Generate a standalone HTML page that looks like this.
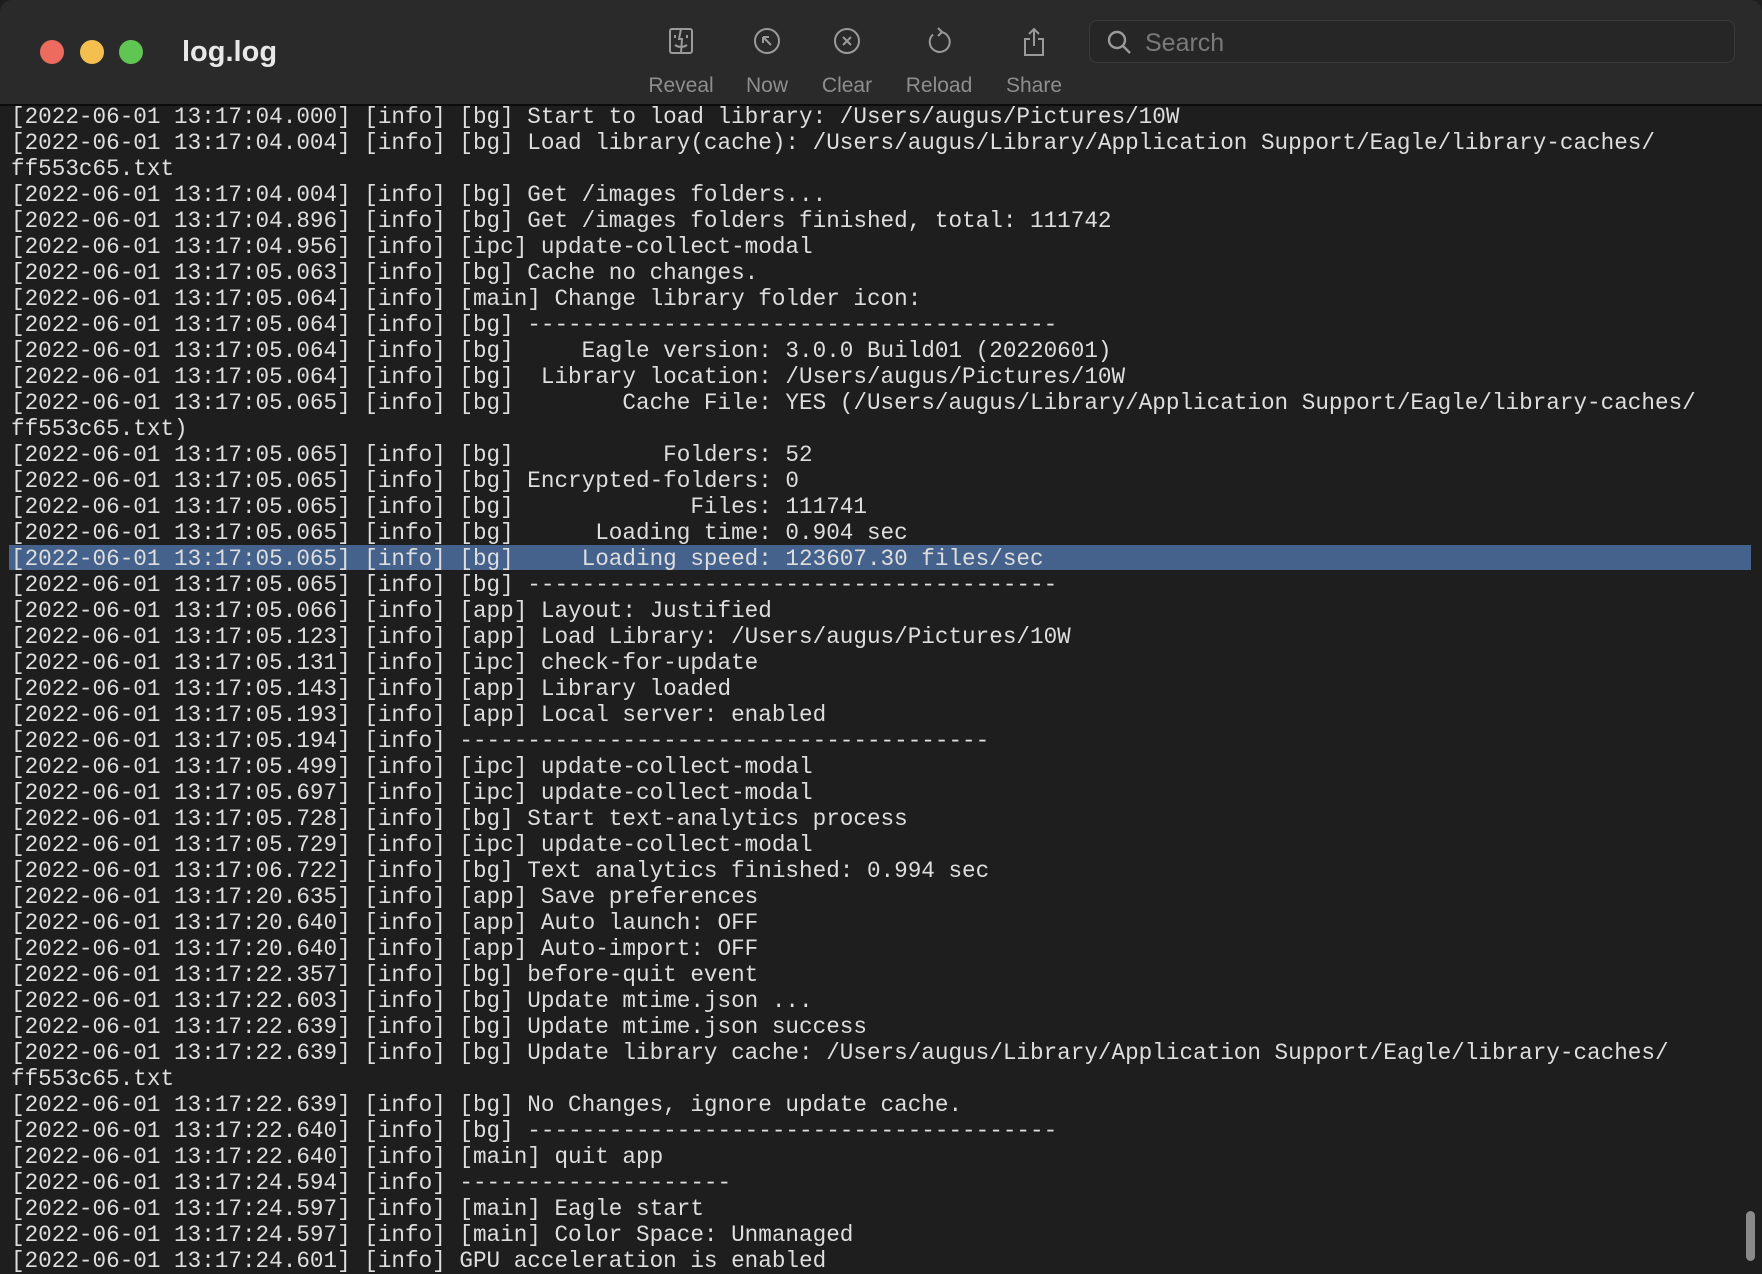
<!DOCTYPE html>
<html><head><meta charset="utf-8"><style>
html,body{margin:0;padding:0;width:1762px;height:1266px;overflow:hidden;background:#1e1e1e;}
.tb{position:absolute;left:0;top:0;width:1762px;height:104px;background:#2a2a2a;border-bottom:2px solid #0c0c0c;border-radius:12px 12px 0 0;}
.dot{position:absolute;top:40px;width:24px;height:24px;border-radius:50%;}
.title{position:absolute;left:182px;top:36px;font:600 29px "Liberation Sans",sans-serif;color:#e8e8e8;}
.lab{position:absolute;top:74px;font:21px "Liberation Sans",sans-serif;color:#8e8e8e;transform:translateX(-50%);}
.ic{position:absolute;top:27px;transform:translateX(-50%);}
.search{position:absolute;left:1089px;top:20px;width:646px;height:43px;border:1px solid #3a3a3a;background:#262626;border-radius:8px;box-sizing:border-box;}
.search span{position:absolute;left:55px;top:8px;font:25px "Liberation Sans",sans-serif;color:#7a7a7a;}
pre{position:absolute;left:11px;top:104px;margin:0;font:22.65px/26px "Liberation Mono",monospace;color:#dedede;white-space:pre;}
.hl{position:absolute;left:9px;top:545px;width:1742px;height:25px;background:#45628d;}
.sb{position:absolute;left:1746px;top:1211px;width:9px;height:50px;border-radius:5px;background:#8a8a8a;}
</style></head><body>
<div class="tb">
<div class="dot" style="left:40px;background:#ec6a5e"></div>
<div class="dot" style="left:80px;background:#f4bf4f"></div>
<div class="dot" style="left:119px;background:#61c554"></div>
<div class="title">log.log</div>
<svg class="ic" style="left:681px" width="28" height="28" viewBox="0 0 28 28" fill="none" stroke="#9a9a9a" stroke-width="2"><rect x="3" y="2" width="22" height="24" rx="2"/><path d="M14 2 L12 12 H15 L14 26 M8 8v3 M20 8v3 M8 18 q6 4 12 0"/></svg>
<svg class="ic" style="left:767px" width="28" height="28" viewBox="0 0 28 28" fill="none" stroke="#9a9a9a" stroke-width="2"><circle cx="14" cy="14" r="12"/><path d="M18 18 L10 10 M10 10h6 M10 10v6"/></svg>
<svg class="ic" style="left:847px" width="28" height="28" viewBox="0 0 28 28" fill="none" stroke="#9a9a9a" stroke-width="2"><circle cx="14" cy="14" r="12"/><path d="M10 10 L18 18 M18 10 L10 18"/></svg>
<svg class="ic" style="left:939px" width="28" height="28" viewBox="0 0 28 28" fill="none" stroke="#9a9a9a" stroke-width="2"><path d="M16 5 A10 10 0 1 1 8 7.5"/><path d="M13 1 L17 5 L13 9"/></svg>
<svg class="ic" style="left:1034px" width="28" height="30" viewBox="0 0 28 30" fill="none" stroke="#9a9a9a" stroke-width="2"><path d="M14 2 V19 M9 7 L14 2 L19 7 M10 12 H5 V28 H23 V12 H18"/></svg>
<div class="lab" style="left:681px">Reveal</div>
<div class="lab" style="left:767px">Now</div>
<div class="lab" style="left:847px">Clear</div>
<div class="lab" style="left:939px">Reload</div>
<div class="lab" style="left:1034px">Share</div>
<div class="search"><svg style="position:absolute;left:17px;top:9px" width="26" height="26" viewBox="0 0 26 26" fill="none" stroke="#9a9a9a" stroke-width="2.4"><circle cx="10" cy="10" r="8"/><path d="M16 16 L23 23"/></svg><span>Search</span></div>
</div>
<div class="hl"></div>
<pre>[2022-06-01 13:17:04.000] [info] [bg] Start to load library: /Users/augus/Pictures/10W
[2022-06-01 13:17:04.004] [info] [bg] Load library(cache): /Users/augus/Library/Application Support/Eagle/library-caches/
ff553c65.txt
[2022-06-01 13:17:04.004] [info] [bg] Get /images folders...
[2022-06-01 13:17:04.896] [info] [bg] Get /images folders finished, total: 111742
[2022-06-01 13:17:04.956] [info] [ipc] update-collect-modal
[2022-06-01 13:17:05.063] [info] [bg] Cache no changes.
[2022-06-01 13:17:05.064] [info] [main] Change library folder icon:
[2022-06-01 13:17:05.064] [info] [bg] ---------------------------------------
[2022-06-01 13:17:05.064] [info] [bg]     Eagle version: 3.0.0 Build01 (20220601)
[2022-06-01 13:17:05.064] [info] [bg]  Library location: /Users/augus/Pictures/10W
[2022-06-01 13:17:05.065] [info] [bg]        Cache File: YES (/Users/augus/Library/Application Support/Eagle/library-caches/
ff553c65.txt)
[2022-06-01 13:17:05.065] [info] [bg]           Folders: 52
[2022-06-01 13:17:05.065] [info] [bg] Encrypted-folders: 0
[2022-06-01 13:17:05.065] [info] [bg]             Files: 111741
[2022-06-01 13:17:05.065] [info] [bg]      Loading time: 0.904 sec
[2022-06-01 13:17:05.065] [info] [bg]     Loading speed: 123607.30 files/sec
[2022-06-01 13:17:05.065] [info] [bg] ---------------------------------------
[2022-06-01 13:17:05.066] [info] [app] Layout: Justified
[2022-06-01 13:17:05.123] [info] [app] Load Library: /Users/augus/Pictures/10W
[2022-06-01 13:17:05.131] [info] [ipc] check-for-update
[2022-06-01 13:17:05.143] [info] [app] Library loaded
[2022-06-01 13:17:05.193] [info] [app] Local server: enabled
[2022-06-01 13:17:05.194] [info] ---------------------------------------
[2022-06-01 13:17:05.499] [info] [ipc] update-collect-modal
[2022-06-01 13:17:05.697] [info] [ipc] update-collect-modal
[2022-06-01 13:17:05.728] [info] [bg] Start text-analytics process
[2022-06-01 13:17:05.729] [info] [ipc] update-collect-modal
[2022-06-01 13:17:06.722] [info] [bg] Text analytics finished: 0.994 sec
[2022-06-01 13:17:20.635] [info] [app] Save preferences
[2022-06-01 13:17:20.640] [info] [app] Auto launch: OFF
[2022-06-01 13:17:20.640] [info] [app] Auto-import: OFF
[2022-06-01 13:17:22.357] [info] [bg] before-quit event
[2022-06-01 13:17:22.603] [info] [bg] Update mtime.json ...
[2022-06-01 13:17:22.639] [info] [bg] Update mtime.json success
[2022-06-01 13:17:22.639] [info] [bg] Update library cache: /Users/augus/Library/Application Support/Eagle/library-caches/
ff553c65.txt
[2022-06-01 13:17:22.639] [info] [bg] No Changes, ignore update cache.
[2022-06-01 13:17:22.640] [info] [bg] ---------------------------------------
[2022-06-01 13:17:22.640] [info] [main] quit app
[2022-06-01 13:17:24.594] [info] --------------------
[2022-06-01 13:17:24.597] [info] [main] Eagle start
[2022-06-01 13:17:24.597] [info] [main] Color Space: Unmanaged
[2022-06-01 13:17:24.601] [info] GPU acceleration is enabled</pre>
<div class="sb"></div>
</body></html>
